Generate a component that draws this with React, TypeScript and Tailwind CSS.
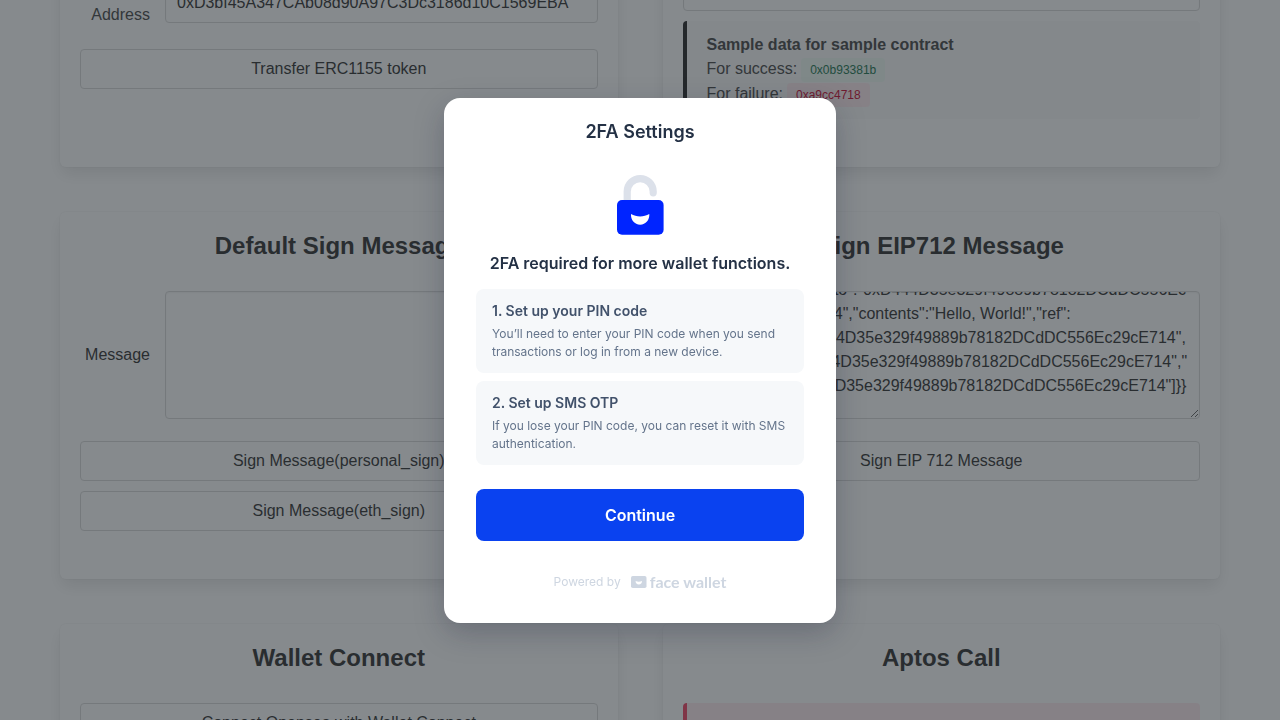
import { useEffect, useRef, type ReactNode } from 'react';

const HEX = '0xD444D35e329f49889b78182DCdDC556Ec29cE714';
const TYPED_DATA = [
  '"message":{"from":"sample","name"',
  `:"Bob","to":"${HEX.slice(0, 35)}`,
  `${HEX.slice(35)}","contents":"Hello, World!","ref":`,
  `["${HEX}",`,
  `"${HEX}","`,
  `${HEX}"]}}`,
  '',
].join('\n');

const fieldClass =
  'block w-full rounded border border-[#dbdbdb] bg-white px-[11px] text-base leading-6 text-[#363636] shadow-[inset_0_1px_2px_rgba(10,10,10,0.05)]';

function Card({ title, children }: { title?: string; children: ReactNode }) {
  return (
    <section className="rounded-md bg-white px-5 pt-5 pb-12 shadow-[0_8px_16px_-2px_rgba(10,10,10,0.1),0_0_0_1px_rgba(10,10,10,0.02)]">
      {title && (
        <h2 className="mb-8 text-center text-2xl leading-[27px] font-bold text-[#363636]">{title}</h2>
      )}
      {children}
    </section>
  );
}

function ActionButton({ children }: { children: ReactNode }) {
  return (
    <button
      type="button"
      className="h-10 w-full rounded border border-[#dbdbdb] bg-white text-base leading-6 text-[#363636]"
    >
      {children}
    </button>
  );
}

function LockIcon() {
  return (
    <svg className="mx-auto block" width="48" height="60" viewBox="0 0 48 60" aria-hidden="true">
      <path
        d="M11.2 28V16.600a13 13 0 0 1 26 0v1.200"
        fill="none"
        stroke="#dce1ea"
        strokeWidth="7.2"
        strokeLinecap="round"
      />
      <rect x="1" y="25" width="46.6" height="34.7" rx="5" fill="#0024ff" />
      <path d="M15 39c5.500 3.300 12.800 3.300 18.300 0 .5 5.800-3.600 10.700-9.150 10.700S14.500 44.800 15 39Z" fill="#fff" />
    </svg>
  );
}

function FaceWalletLogo() {
  return (
    <span className="flex items-center gap-[3px] text-[#ced6e1]">
      <svg width="16" height="12" viewBox="0 0 16 12" aria-hidden="true">
        <rect width="15.500" height="12" rx="1.800" fill="currentColor" />
        <path d="M4.600 4.900c2 1.100 4.400 1.100 6.400 0 .1 2-1.300 3.500-3.200 3.500S4.500 6.900 4.600 4.900Z" fill="#fff" />
      </svg>
      <span className="font-[Lato,sans-serif] text-base leading-[18px] font-bold">face wallet</span>
    </span>
  );
}

function Step({ title, children }: { title: string; children: ReactNode }) {
  return (
    <li className="rounded-lg bg-[#f6f8fa] px-4 py-3">
      <h4 className="text-sm leading-5 font-semibold text-[#42526b]">{title}</h4>
      <p className="mt-1 text-xs leading-[18px] text-[#64748b]">{children}</p>
    </li>
  );
}

export default function App() {
  const typedData = useRef<HTMLTextAreaElement>(null);

  useEffect(() => {
    if (typedData.current) typedData.current.scrollTop = 50;
  }, []);

  return (
    <div className="relative h-screen overflow-hidden bg-white font-['Liberation_Sans',Arial,sans-serif] text-[#4a4a4a]">
      <main className="-mt-[37px] grid grid-cols-2 gap-[45px] px-[60px]">
        <Card>
          <div className="mb-[22px] flex items-start gap-[15px]">
            <label htmlFor="address" className="w-[70px] shrink-0 pt-5 text-right leading-6">
              Address
            </label>
            <input
              id="address"
              className={`${fieldClass} h-10`}
              defaultValue="0xD3bf45A347CAb08d90A97C3Dc3186d10C1569EBA"
            />
          </div>
          <ActionButton>Transfer ERC1155 token</ActionButton>
        </Card>

        <Card>
          <input aria-label="Data" className={`${fieldClass} h-7`} />
          <div className="mt-[10px] rounded border-l-4 border-[#2a2a2a] bg-[#fafafa] px-5 py-3 leading-6">
            <p className="font-bold">Sample data for sample contract</p>
            <p className="flex h-[25px] items-start gap-1">
              For success:
              <code className="mt-px rounded bg-[#effaf5] px-[9px] font-[Liberation_Sans,Arial,sans-serif] text-xs leading-6 text-[#257953]">
                0x0b93381b
              </code>
            </p>
            <p className="flex h-[25px] items-start gap-1">
              For failure:
              <code className="mt-px rounded bg-[#feecf0] px-[9px] font-[Liberation_Sans,Arial,sans-serif] text-xs leading-6 text-[#cc0f35]">
                0xa9cc4718
              </code>
            </p>
          </div>
        </Card>

        <Card title="Default Sign Message">
          <div className="mb-[22px] flex items-center gap-[15px]">
            <label htmlFor="message" className="w-[70px] shrink-0 text-right leading-6 text-[#363636]">
              Message
            </label>
            <textarea id="message" className={`${fieldClass} h-32 resize-none py-3`} />
          </div>
          <div className="space-y-[10px]">
            <ActionButton>Sign Message(personal_sign)</ActionButton>
            <ActionButton>Sign Message(eth_sign)</ActionButton>
          </div>
        </Card>

        <Card title="Sign EIP712 Message">
          <div className="mb-[22px] flex items-center gap-[15px]">
            <span className="w-[70px] shrink-0" />
            <textarea
              aria-label="Message"
              ref={typedData}
              className={`${fieldClass} h-32 resize-y overflow-hidden py-3 break-all`}
              defaultValue={TYPED_DATA}
            />
          </div>
          <ActionButton>Sign EIP 712 Message</ActionButton>
        </Card>

        <Card title="Wallet Connect">
          <ActionButton>Connect Opensea with Wallet Connect</ActionButton>
        </Card>

        <Card title="Aptos Call">
          <div className="h-24 rounded border-l-4 border-[#f14668] bg-[#feecf0]" />
        </Card>
      </main>

      <div className="fixed inset-0 flex items-center justify-center bg-[#20262c]/54">
        <div
          role="dialog"
          aria-modal="true"
          aria-labelledby="dialog-title"
          className="w-[392px] rounded-2xl bg-white px-8 pt-5 pb-8 font-[Inter,sans-serif] text-[#243145] shadow-[0_10px_30px_rgba(20,24,50,0.25)]"
        >
          <h2 id="dialog-title" className="mb-[29px] text-center text-lg leading-7 font-semibold">
            2FA Settings
          </h2>
          <LockIcon />
          <h3 className="mt-4 mb-[14px] text-center text-base leading-6 font-semibold">
            2FA required for more wallet functions.
          </h3>
          <ol className="space-y-2">
            <Step title="1. Set up your PIN code">
              You’ll need to enter your PIN code when you send transactions or log in from a new device.
            </Step>
            <Step title="2. Set up SMS OTP">
              If you lose your PIN code, you can reset it with SMS authentication.
            </Step>
          </ol>
          <button
            type="button"
            className="mt-6 h-[52px] w-full rounded-lg bg-[#0a42f0] text-base leading-6 font-semibold text-white"
          >
            Continue
          </button>
          <div className="mt-8 flex items-center justify-center gap-[10px] text-xs leading-[18px] text-[#ced6e1]">
            <span>Powered by</span>
            <FaceWalletLogo />
          </div>
        </div>
      </div>
    </div>
  );
}
